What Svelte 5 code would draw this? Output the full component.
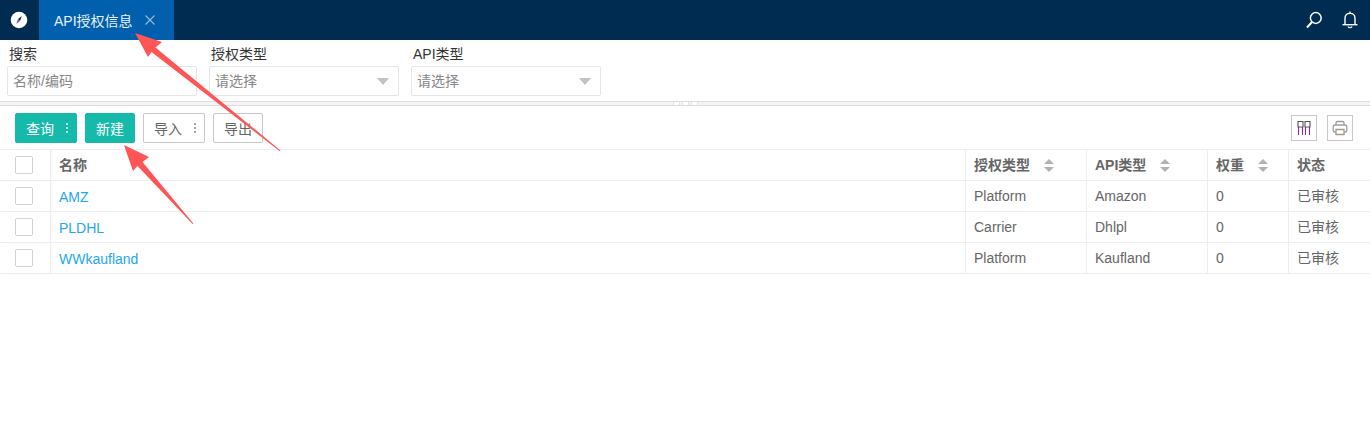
<script lang="ts">
  const rows = [
    { name: 'AMZ', auth: 'Platform', api: 'Amazon', weight: 0, status: '已审核' },
    { name: 'PLDHL', auth: 'Carrier', api: 'Dhlpl', weight: 0, status: '已审核' },
    { name: 'WWkaufland', auth: 'Platform', api: 'Kaufland', weight: 0, status: '已审核' },
  ]
</script>

<div class="page">
  <header class="topbar">
    <div class="logo">
      <svg width="18" height="18" viewBox="0 0 18 18">
        <circle cx="9" cy="9" r="8.3" fill="#fff" />
        <path d="M11.8 5 L10 10 L8 8 Z" fill="#002c52" />
        <path d="M6.2 13 L8 8 L10 10 Z" fill="#6a5fb0" />
      </svg>
    </div>
    <div class="tab">
      <span>API授权信息</span>
      <svg width="12" height="12" viewBox="0 0 12 12"><path d="M1.5 1.5 L10.5 10.5 M10.5 1.5 L1.5 10.5" stroke="#9db9d6" stroke-width="1.1" /></svg>
    </div>
    <div class="top-icons">
      <svg width="18" height="18" viewBox="0 0 18 18" fill="none" stroke="#fff">
        <circle cx="10.8" cy="7" r="5.4" stroke-width="1.5" />
        <path d="M7 11 L2 16.5" stroke-width="2" />
      </svg>
      <svg width="16" height="18" viewBox="0 0 16 18" fill="none" stroke="#fff" stroke-width="1.4">
        <path d="M3 13.5 V7.5 C3 4.5 5 2.4 8 2.4 C11 2.4 13 4.5 13 7.5 V13.5" />
        <path d="M0.5 13.7 H15.5" />
        <path d="M6 15.5 C6.5 17 9.5 17 10 15.5" stroke="#cfe6f7" />
        <path d="M8 0.5 V2" />
      </svg>
    </div>
  </header>

  <section class="filters">
    <div class="field">
      <label for="q">搜索</label>
      <div class="input" id="q">名称/编码</div>
    </div>
    <div class="field">
      <label for="auth">授权类型</label>
      <div class="input" id="auth">请选择<i class="caret"></i></div>
    </div>
    <div class="field">
      <label for="api">API类型</label>
      <div class="input" id="api">请选择<i class="caret"></i></div>
    </div>
  </section>

  <div class="splitter"><span></span><span></span><span></span></div>

  <div class="toolbar">
    <button class="btn primary">查询<i class="dots"></i></button>
    <button class="btn primary new">新建</button>
    <button class="btn plain">导入<i class="dots grey"></i></button>
    <button class="btn plain out">导出</button>
    <div class="tools">
      <button class="tool" aria-label="列">
        <svg width="16" height="16" viewBox="0 0 16 16" fill="none" stroke-width="1.1">
          <path d="M2 1.5 H7 V7 H2 Z M9 1.5 H14 V7 H9 Z" stroke="#555" />
          <path d="M2.5 7 V15 M6.5 7 V15 M9.5 7 V15 M13.5 7 V15" stroke="#8a2c95" />
        </svg>
      </button>
      <button class="tool print" aria-label="打印">
        <svg width="16" height="16" viewBox="0 0 16 16" fill="none" stroke-width="1.3">
          <path d="M4 5 V3 Q4 1.5 5.5 1.5 H10.5 Q12 1.5 12 3 V5" stroke="#a39a90" />
          <path d="M3.8 12 H3 Q1.2 12 1.2 10 V7 Q1.2 5 3 5 H13 Q14.8 5 14.8 7 V10 Q14.8 12 13 12 H12.2" stroke="#9a9fa8" />
          <path d="M4 9.5 H12 V14.5 H4 Z" stroke="#a39a90" />
        </svg>
      </button>
    </div>
  </div>

  <table>
    <colgroup>
      <col class="c-check" /><col /><col class="c-type" /><col class="c-type" /><col class="c-weight" /><col class="c-status" />
    </colgroup>
    <thead>
      <tr>
        <th class="check"><i class="box"></i></th>
        <th>名称</th>
        <th>授权类型<i class="sort"></i></th>
        <th>API类型<i class="sort"></i></th>
        <th>权重<i class="sort"></i></th>
        <th>状态</th>
      </tr>
    </thead>
    <tbody>
      {#each rows as row}
        <tr>
          <td class="check"><i class="box"></i></td>
          <td class="link">{row.name}</td>
          <td>{row.auth}</td>
          <td>{row.api}</td>
          <td>{row.weight}</td>
          <td class="status">{row.status}</td>
        </tr>
      {/each}
    </tbody>
  </table>

  <!-- annotation arrows drawn over the screenshot -->
  <svg class="arrows" width="1370" height="435" viewBox="0 0 1370 435">
    <path d="M135 33 L162 42 L155.5 47.5 L280.5 150.4 L279.8 151.2 L151.5 52 L148 57 Z" fill="#ff5555" />
    <path d="M124 145 L149 157 L142.5 162 L193.4 223.4 L192.6 224 L137.5 166 L133 171 Z" fill="#ff5555" />
  </svg>
</div>

<style>
  :global(body) { margin: 0; background: #fff; }
  .page {
    position: relative;
    width: 1370px;
    height: 435px;
    overflow: hidden;
    font-family: "Liberation Sans", "Noto Sans CJK SC", sans-serif;
    font-size: 14px;
    color: #666;
  }
  .topbar { height: 40px; background: #002c52; display: flex; align-items: stretch; }
  .logo { width: 39px; padding-right: 1px; box-sizing: border-box; display: flex; align-items: center; justify-content: center; }
  .tab {
    width: 135px;
    box-sizing: border-box;
    padding-left: 15px;
    background: #0060ae;
    color: #e8f1f8;
    display: flex;
    align-items: center;
    gap: 11px;
    font-size: 14px;
  }
  .top-icons { margin-left: auto; display: flex; align-items: center; gap: 19px; padding-right: 12px; }

  .filters { display: flex; gap: 12px; padding: 6px 0 0 7px; height: 55px; box-sizing: border-box; }
  .field { width: 190px; }
  .field label { display: block; height: 20px; line-height: 16px; padding-left: 2px; color: #333; font-size: 14px; }
  .input {
    position: relative;
    box-sizing: border-box;
    height: 30px;
    line-height: 28px;
    padding-left: 5px;
    border: 1px solid #e6e6e6;
    border-radius: 2px;
    color: #888;
    font-size: 14px;
  }
  .caret {
    position: absolute;
    right: 9px;
    top: 11px;
    border: 6px solid transparent;
    border-top: 7px solid #c2c2c2;
    border-bottom: 0;
  }

  .splitter {
    height: 3px;
    margin-top: 6px;
    background: #f4f4f4;
    border-top: 1px solid #ddd;
    border-bottom: 1px solid #ddd;
    display: flex;
    justify-content: flex-start;
    gap: 2px;
    padding-left: 673px;
  }
  .splitter span { width: 7px; background: #fff; border-left: 1px solid #e4e4e4; border-right: 1px solid #e4e4e4; box-sizing: border-box; }

  .toolbar { display: flex; align-items: flex-start; height: 43px; padding: 7px 0 0 15px; box-sizing: border-box; }
  .btn {
    height: 30px;
    box-sizing: border-box;
    border-radius: 2px;
    font: inherit;
    font-size: 14px;
    padding: 0;
    display: flex;
    align-items: center;
  }
  .primary { background: #16baaa; border: 1px solid #16baaa; color: #fff; width: 62px; padding-left: 10px; margin-right: 8px; }
  .primary.new { width: 50px; padding-left: 10px; }
  .plain { background: #fff; border: 1px solid #c9c9c9; color: #666; width: 62px; padding-left: 10px; margin-right: 8px; }
  .plain.out { width: 50px; }
  .dots { width: 2px; height: 2px; margin-left: 12px; background: currentColor; border-radius: 50%; box-shadow: 0 -4px 0 currentColor, 0 4px 0 currentColor; }
  .dots.grey { color: #888; }
  .tools { margin-left: auto; margin-top: 2px; display: flex; gap: 10px; padding-right: 17px; }
  .tool {
    width: 26px;
    height: 26px;
    padding: 0;
    background: #fff;
    border: 1px solid #c9c9c9;
    display: flex;
    align-items: center;
    justify-content: center;
  }

  table { width: 1370px; table-layout: fixed; border-collapse: collapse; }
  .c-check { width: 50px; }
  .c-type { width: 121px; }
  .c-weight { width: 81px; }
  .c-status { width: 82px; }
  th, td {
    height: 31px;
    box-sizing: border-box;
    padding: 0 8px 0 8.5px;
    text-align: left;
    font-size: 14px;
    border-top: 1px solid #eee;
    border-bottom: 1px solid #eee;
    border-left: 1px solid #eee;
  }
  th:first-child, td:first-child { border-left: 0; }
  th { font-weight: bold; color: #666; padding-bottom: 2px; }
  .status { padding-bottom: 2px; }
  .check { padding: 0 0 0 15px; box-shadow: 2px 0 3px -1px #eee; }
  .box { display: block; width: 18px; height: 18px; box-sizing: border-box; border: 1px solid #d2d2d2; border-radius: 2px; background: #fff; }
  .link { color: #1ea7f2; padding-top: 1px; }
  .sort { display: inline-block; position: relative; width: 10px; height: 12px; margin-left: 14px; vertical-align: -1px; }
  .sort::before, .sort::after { content: ""; position: absolute; left: 0; border: 5px solid transparent; }
  .sort::before { top: -0.5px; border-top: 0; border-bottom: 5px solid #b2b2b2; }
  .sort::after { bottom: -0.5px; border-bottom: 0; border-top: 5px solid #b2b2b2; }

  .arrows { position: absolute; left: 0; top: 0; pointer-events: none; }
</style>
